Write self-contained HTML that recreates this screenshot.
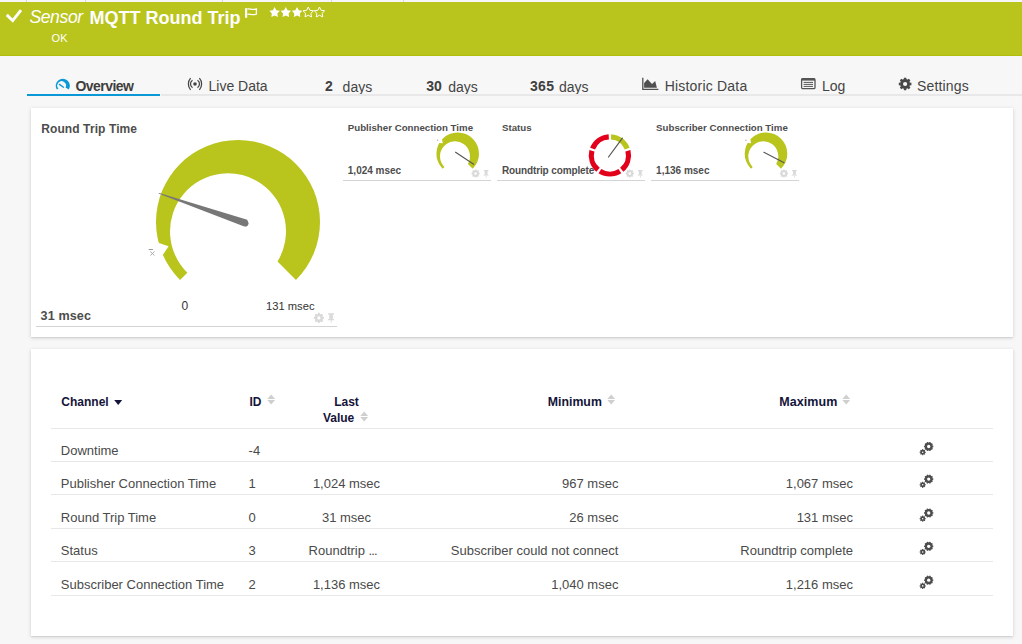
<!DOCTYPE html>
<html><head><meta charset="utf-8"><style>
html,body{margin:0;padding:0;}
body{width:1022px;height:644px;position:relative;overflow:hidden;background:#f7f7f7;font-family:"Liberation Sans",sans-serif;}
.t{position:absolute;line-height:1;white-space:nowrap;}
svg{overflow:visible;}
</style></head><body>
<div style="position:absolute;left:0px;top:0px;width:1022px;height:2px;background:#f6f6f9;"></div>
<div style="position:absolute;left:26px;top:0px;width:1px;height:2px;background:#d8d8dc;"></div>
<div style="position:absolute;left:85px;top:0px;width:1px;height:2px;background:#d8d8dc;"></div>
<div style="position:absolute;left:222px;top:0px;width:1px;height:2px;background:#d8d8dc;"></div>
<div style="position:absolute;left:331px;top:0px;width:1px;height:2px;background:#d8d8dc;"></div>
<div style="position:absolute;left:403px;top:0px;width:1px;height:2px;background:#d8d8dc;"></div>
<div style="position:absolute;left:0px;top:2px;width:1022px;height:53px;background:#b9c41c;"></div>
<div style="position:absolute;left:0px;top:54.6px;width:1022px;height:1px;background:#b2be0c;"></div>
<div style="position:absolute;left:0px;top:55.6px;width:1022px;height:1px;background:#f8f8fb;"></div>
<svg style="position:absolute;left:0;top:0" width="30" height="30"><polyline points="6.8,14.9 12.7,20.7 21,10.2" fill="none" stroke="#fff" stroke-width="2.9"/></svg>
<div class="t" style="left:29.40px;top:9.10px;font-size:17.6px;font-weight:400;color:#fff;font-style:italic;letter-spacing:-0.4px;">Sensor</div>
<div class="t" style="left:89.60px;top:8.86px;font-size:18px;font-weight:700;color:#fff;">MQTT Round Trip</div>
<svg style="position:absolute;left:244px;top:7px" width="16" height="12"><rect x="1" y="1.2" width="2.2" height="9.6" fill="#fff"/><path d="M3.4 2.2 C5.5 1.2 7.5 3.2 12.4 2 V7.2 C7.5 8.4 5.5 6.4 3.4 7.4" fill="none" stroke="#fff" stroke-width="1.3"/></svg>
<svg style="position:absolute;left:266px;top:4px" width="64" height="16"><polygon points="8.60,3.00 10.31,6.14 13.83,6.80 11.37,9.40 11.83,12.95 8.60,11.41 5.37,12.95 5.83,9.40 3.37,6.80 6.89,6.14" fill="#fff"/><polygon points="19.82,3.00 21.53,6.14 25.05,6.80 22.59,9.40 23.05,12.95 19.82,11.41 16.59,12.95 17.05,9.40 14.59,6.80 18.11,6.14" fill="#fff"/><polygon points="31.04,3.00 32.75,6.14 36.27,6.80 33.81,9.40 34.27,12.95 31.04,11.41 27.81,12.95 28.27,9.40 25.81,6.80 29.33,6.14" fill="#fff"/><polygon points="42.26,3.00 43.88,6.28 47.49,6.80 44.88,9.35 45.49,12.95 42.26,11.25 39.03,12.95 39.64,9.35 37.03,6.80 40.64,6.28" fill="none" stroke="#fff" stroke-width="1"/><polygon points="53.48,3.00 55.10,6.28 58.71,6.80 56.10,9.35 56.71,12.95 53.48,11.25 50.25,12.95 50.86,9.35 48.25,6.80 51.86,6.28" fill="none" stroke="#fff" stroke-width="1"/></svg>
<div class="t" style="left:51.60px;top:33.09px;font-size:11px;font-weight:400;color:#fff;">OK</div>
<svg style="position:absolute;left:0;top:0" width="1022" height="644"><path d="M56.78,89.56 A7.1,7.1 0 1 1 68.82,89.56 L65.51,87.50 A4.35,4.35 0 1 0 58.49,88.49 Z" fill="#0a98d6"/><line x1="59.4" y1="84.4" x2="63.5" y2="87.2" stroke="#0a98d6" stroke-width="1.35" stroke-linecap="round"/></svg>
<div class="t" style="left:75.50px;top:79.25px;font-size:14px;font-weight:700;color:#3e3e3e;letter-spacing:-0.55px;">Overview</div>
<svg style="position:absolute;left:186px;top:76px" width="18" height="16"><circle cx="9" cy="8" r="1.8" fill="#444"/><path d="M6.5 4.3 A4.42 4.42 0 0 0 6.5 11.7 M11.5 4.3 A4.42 4.42 0 0 1 11.5 11.7" fill="none" stroke="#444" stroke-width="1.25"/><path d="M4.6 2.2 A8.75 8.75 0 0 0 4.6 13.8 M13.4 2.2 A8.75 8.75 0 0 1 13.4 13.8" fill="none" stroke="#444" stroke-width="1.25"/></svg>
<div class="t" style="left:208.50px;top:79.25px;font-size:14px;font-weight:400;color:#444;">Live Data</div>
<div class="t" style="left:325.00px;top:78.75px;font-size:14px;font-weight:700;color:#404040;">2</div>
<div class="t" style="left:342.60px;top:80.05px;font-size:14px;font-weight:400;color:#444;">days</div>
<div class="t" style="left:426.30px;top:78.75px;font-size:14px;font-weight:700;color:#404040;">30</div>
<div class="t" style="left:448.30px;top:80.05px;font-size:14px;font-weight:400;color:#444;">days</div>
<div class="t" style="left:530.00px;top:78.75px;font-size:14px;font-weight:700;color:#404040;letter-spacing:0.3px;">365</div>
<div class="t" style="left:559.00px;top:80.05px;font-size:14px;font-weight:400;color:#444;">days</div>
<svg style="position:absolute;left:640px;top:76px" width="20" height="16"><path d="M2.8 1.8 V13.3 H18.4" fill="none" stroke="#505050" stroke-width="1.3"/><path d="M4.1 11.8 V7 L7.6 3.2 L12 8 L15.2 5 L16.9 11.8 Z" fill="#505050"/></svg>
<div class="t" style="left:664.70px;top:79.25px;font-size:14px;font-weight:400;color:#444;letter-spacing:0.2px;">Historic Data</div>
<svg style="position:absolute;left:800px;top:77px" width="17" height="13"><rect x="1.6" y="1.6" width="13.4" height="10" rx="1.2" fill="none" stroke="#555" stroke-width="1.3"/><rect x="1.6" y="1.2" width="13.4" height="2.4" fill="#555"/><path d="M3.6 5.4 H13 M3.6 7.4 H13 M3.6 9.4 H13" stroke="#555" stroke-width="1"/></svg>
<div class="t" style="left:822.00px;top:79.25px;font-size:14px;font-weight:400;color:#444;">Log</div>
<svg style="position:absolute;left:896px;top:75px" width="18" height="18"><path d="M14.00,9.00 A4.9,4.9 0 1 0 4.20,9.00 A4.9,4.9 0 1 0 14.00,9.00 Z" fill="#484848"/><polygon points="13.40,10.44 15.40,10.15 15.40,7.85 13.40,7.56" fill="#484848"/><polygon points="11.12,13.06 12.74,14.27 14.37,12.64 13.16,11.02" fill="#484848"/><polygon points="7.66,13.30 7.95,15.30 10.25,15.30 10.54,13.30" fill="#484848"/><polygon points="5.04,11.02 3.83,12.64 5.46,14.27 7.08,13.06" fill="#484848"/><polygon points="4.80,7.56 2.80,7.85 2.80,10.15 4.80,10.44" fill="#484848"/><polygon points="7.08,4.94 5.46,3.73 3.83,5.36 5.04,6.98" fill="#484848"/><polygon points="10.54,4.70 10.25,2.70 7.95,2.70 7.66,4.70" fill="#484848"/><polygon points="13.16,6.98 14.37,5.36 12.74,3.73 11.12,4.94" fill="#484848"/><circle cx="9.1" cy="9" r="2.1" fill="#f7f7f7"/></svg>
<div class="t" style="left:917.00px;top:79.25px;font-size:14px;font-weight:400;color:#444;letter-spacing:0.15px;">Settings</div>
<div style="position:absolute;left:27px;top:94px;width:133px;height:2px;background:#0a98d6;"></div>
<div style="position:absolute;left:161px;top:94px;width:861px;height:2px;background:#e8e8e8;"></div>
<div style="position:absolute;left:31px;top:108px;width:982px;height:229px;background:#fff;box-shadow:0 1px 4px rgba(0,0,0,0.15),0 1px 1px rgba(0,0,0,0.06);"></div>
<div class="t" style="left:41.20px;top:122.54px;font-size:12px;font-weight:700;color:#4d4d4d;letter-spacing:0.1px;">Round Trip Time</div>
<svg style="position:absolute;left:0;top:0" width="1022" height="644"><path d="M180.02,279.98 A82,82 0 1 1 295.98,279.98 L277.51,261.51 A58,58 0 1 0 187.34,272.66 Z" fill="#b9c41c"/><polygon points="157.5,242.6 168.6,246.3 162.6,255.2 150,255 150,242" fill="#fff"/><polygon points="158.4,193.6 159.2,193 247.2,219.8 248.4,224 246.6,226.6 243.6,226.2" fill="#777"/><circle cx="245.4" cy="223.2" r="3" fill="#777"/><path d="M148.7 249.5 H153" stroke="#999" stroke-width="1"/><path d="M150.3 251.4 L154.5 255.6 M154.5 251.4 L150.3 255.6" stroke="#aaa" stroke-width="1"/></svg>
<div class="t" style="left:181.60px;top:299.84px;font-size:12px;font-weight:400;color:#333;">0</div>
<div class="t" style="left:266.00px;top:300.52px;font-size:11.2px;font-weight:400;color:#333;">131 msec</div>
<div class="t" style="left:40.60px;top:309.63px;font-size:12.6px;font-weight:700;color:#4d4d4d;letter-spacing:0.1px;">31 msec</div>
<div style="position:absolute;left:36px;top:326px;width:301px;height:1px;background:#d4d4d4;"></div>
<svg style="position:absolute;left:0;top:0" width="1022" height="644"><path d="M322.90,317.90 A4.0,4.0 0 1 0 314.90,317.90 A4.0,4.0 0 1 0 322.90,317.90 Z" fill="#d9d9d9"/><polygon points="322.30,318.99 324.02,318.77 324.02,317.02 322.30,316.81" fill="#d9d9d9"/><polygon points="320.53,321.08 321.91,322.14 323.14,320.91 322.08,319.53" fill="#d9d9d9"/><polygon points="317.81,321.30 318.02,323.02 319.77,323.02 319.99,321.30" fill="#d9d9d9"/><polygon points="315.72,319.53 314.66,320.91 315.89,322.14 317.27,321.08" fill="#d9d9d9"/><polygon points="315.50,316.81 313.77,317.02 313.77,318.77 315.50,318.99" fill="#d9d9d9"/><polygon points="317.27,314.72 315.89,313.66 314.66,314.89 315.72,316.27" fill="#d9d9d9"/><polygon points="319.99,314.50 319.77,312.77 318.02,312.77 317.81,314.50" fill="#d9d9d9"/><polygon points="322.08,316.27 323.14,314.89 321.91,313.66 320.53,314.72" fill="#d9d9d9"/><circle cx="318.9" cy="317.9" r="1.625" fill="#fff"/><polygon points="328.20,313.20 333.95,313.20 333.95,314.70 328.20,314.70" fill="#d9d9d9"/><polygon points="329.32,314.45 332.82,314.45 332.82,318.70 329.32,318.70" fill="#d9d9d9"/><polygon points="329.20,318.45 332.95,318.45 334.70,320.20 327.45,320.20" fill="#d9d9d9"/><polygon points="330.70,320.07 331.57,320.07 331.57,322.82 330.70,322.82" fill="#d9d9d9"/></svg>
<div class="t" style="left:347.80px;top:122.59px;font-size:9.7px;font-weight:700;color:#4d4d4d;">Publisher Connection Time</div>
<div class="t" style="left:347.80px;top:165.73px;font-size:10px;font-weight:700;color:#4d4d4d;">1,024 msec</div>
<div style="position:absolute;left:343px;top:180px;width:148px;height:1px;background:#d4d4d4;"></div>
<svg style="position:absolute;left:0;top:0" width="1022" height="644"><path d="M442.64,168.76 A21.3,21.3 0 1 1 472.76,168.76 L467.92,163.92 A15,15 0 1 0 444.44,166.96 Z" fill="#b9c41c"/><polygon points="441.9,139.0 442.8,143.3 439.2,143.0 436.5,139.6" fill="#fff"/><circle cx="437.6" cy="140.2" r="0.6" fill="#b88"/><line x1="455.6" y1="152.2" x2="473.6" y2="164.2" stroke="#585858" stroke-width="1.15" stroke-linecap="round"/></svg>
<svg style="position:absolute;left:0;top:0" width="1022" height="644"><path d="M478.80,173.50 A3.2,3.2 0 1 0 472.40,173.50 A3.2,3.2 0 1 0 478.80,173.50 Z" fill="#d9d9d9"/><polygon points="478.20,174.38 479.70,174.20 479.70,172.80 478.20,172.62" fill="#d9d9d9"/><polygon points="476.82,175.96 478.00,176.89 478.99,175.90 478.06,174.72" fill="#d9d9d9"/><polygon points="474.73,176.10 474.90,177.60 476.30,177.60 476.48,176.10" fill="#d9d9d9"/><polygon points="473.14,174.72 472.21,175.90 473.20,176.89 474.38,175.96" fill="#d9d9d9"/><polygon points="473.00,172.62 471.50,172.80 471.50,174.20 473.00,174.38" fill="#d9d9d9"/><polygon points="474.38,171.04 473.20,170.11 472.21,171.10 473.14,172.28" fill="#d9d9d9"/><polygon points="476.48,170.90 476.30,169.40 474.90,169.40 474.73,170.90" fill="#d9d9d9"/><polygon points="478.06,172.28 478.99,171.10 478.00,170.11 476.82,171.04" fill="#d9d9d9"/><circle cx="475.6" cy="173.5" r="1.3" fill="#fff"/><polygon points="483.80,170.00 488.40,170.00 488.40,171.20 483.80,171.20" fill="#d9d9d9"/><polygon points="484.70,171.00 487.50,171.00 487.50,174.40 484.70,174.40" fill="#d9d9d9"/><polygon points="484.60,174.20 487.60,174.20 489.00,175.60 483.20,175.60" fill="#d9d9d9"/><polygon points="485.80,175.50 486.50,175.50 486.50,177.70 485.80,177.70" fill="#d9d9d9"/></svg>
<div class="t" style="left:502.00px;top:122.59px;font-size:9.7px;font-weight:700;color:#4d4d4d;">Status</div>
<div class="t" style="left:502.00px;top:165.73px;font-size:10px;font-weight:700;color:#4d4d4d;letter-spacing:-0.13px;">Roundtrip complete</div>
<div style="position:absolute;left:497.2px;top:180px;width:148px;height:1px;background:#d4d4d4;"></div>
<svg style="position:absolute;left:0;top:0" width="1022" height="644"><path d="M611.19,134.24 A21.2,21.2 0 0 1 629.62,147.63 L624.79,149.54 A16.0,16.0 0 0 0 610.88,139.43 Z" fill="#b9c41c"/><path d="M630.42,150.09 A21.2,21.2 0 0 1 623.38,171.76 L620.08,167.75 A16.0,16.0 0 0 0 625.39,151.39 Z" fill="#e3001b"/><path d="M621.29,173.28 A21.2,21.2 0 0 1 598.51,173.28 L601.30,168.89 A16.0,16.0 0 0 0 618.50,168.89 Z" fill="#e3001b"/><path d="M596.42,171.76 A21.2,21.2 0 0 1 589.38,150.09 L594.41,151.39 A16.0,16.0 0 0 0 599.72,167.75 Z" fill="#e3001b"/><path d="M590.18,147.63 A21.2,21.2 0 0 1 608.61,134.24 L608.92,139.43 A16.0,16.0 0 0 0 595.01,149.54 Z" fill="#e3001b"/><line x1="608.5" y1="157" x2="622.4" y2="138.2" stroke="#555" stroke-width="1.2" stroke-linecap="round"/></svg>
<svg style="position:absolute;left:0;top:0" width="1022" height="644"><path d="M633.00,173.50 A3.2,3.2 0 1 0 626.60,173.50 A3.2,3.2 0 1 0 633.00,173.50 Z" fill="#d9d9d9"/><polygon points="632.40,174.38 633.90,174.20 633.90,172.80 632.40,172.62" fill="#d9d9d9"/><polygon points="631.02,175.96 632.20,176.89 633.19,175.90 632.26,174.72" fill="#d9d9d9"/><polygon points="628.92,176.10 629.10,177.60 630.50,177.60 630.67,176.10" fill="#d9d9d9"/><polygon points="627.34,174.72 626.41,175.90 627.40,176.89 628.58,175.96" fill="#d9d9d9"/><polygon points="627.20,172.62 625.70,172.80 625.70,174.20 627.20,174.38" fill="#d9d9d9"/><polygon points="628.58,171.04 627.40,170.11 626.41,171.10 627.34,172.28" fill="#d9d9d9"/><polygon points="630.67,170.90 630.50,169.40 629.10,169.40 628.92,170.90" fill="#d9d9d9"/><polygon points="632.26,172.28 633.19,171.10 632.20,170.11 631.02,171.04" fill="#d9d9d9"/><circle cx="629.8" cy="173.5" r="1.3" fill="#fff"/><polygon points="638.00,170.00 642.60,170.00 642.60,171.20 638.00,171.20" fill="#d9d9d9"/><polygon points="638.90,171.00 641.70,171.00 641.70,174.40 638.90,174.40" fill="#d9d9d9"/><polygon points="638.80,174.20 641.80,174.20 643.20,175.60 637.40,175.60" fill="#d9d9d9"/><polygon points="640.00,175.50 640.70,175.50 640.70,177.70 640.00,177.70" fill="#d9d9d9"/></svg>
<div class="t" style="left:656.10px;top:122.59px;font-size:9.7px;font-weight:700;color:#4d4d4d;">Subscriber Connection Time</div>
<div class="t" style="left:656.10px;top:165.73px;font-size:10px;font-weight:700;color:#4d4d4d;">1,136 msec</div>
<div style="position:absolute;left:651.3px;top:180px;width:148px;height:1px;background:#d4d4d4;"></div>
<svg style="position:absolute;left:0;top:0" width="1022" height="644"><path d="M750.94,168.76 A21.3,21.3 0 1 1 781.06,168.76 L776.22,163.92 A15,15 0 1 0 752.74,166.96 Z" fill="#b9c41c"/><polygon points="750.1999999999999,139.0 751.0999999999999,143.3 747.5,143.0 744.8,139.6" fill="#fff"/><circle cx="745.9" cy="140.2" r="0.6" fill="#b88"/><line x1="763.9" y1="152.3" x2="784.0999999999999" y2="162.7" stroke="#585858" stroke-width="1.15" stroke-linecap="round"/></svg>
<svg style="position:absolute;left:0;top:0" width="1022" height="644"><path d="M787.10,173.50 A3.2,3.2 0 1 0 780.70,173.50 A3.2,3.2 0 1 0 787.10,173.50 Z" fill="#d9d9d9"/><polygon points="786.50,174.38 788.00,174.20 788.00,172.80 786.50,172.62" fill="#d9d9d9"/><polygon points="785.12,175.96 786.30,176.89 787.29,175.90 786.36,174.72" fill="#d9d9d9"/><polygon points="783.02,176.10 783.20,177.60 784.60,177.60 784.77,176.10" fill="#d9d9d9"/><polygon points="781.44,174.72 780.51,175.90 781.50,176.89 782.68,175.96" fill="#d9d9d9"/><polygon points="781.30,172.62 779.80,172.80 779.80,174.20 781.30,174.38" fill="#d9d9d9"/><polygon points="782.68,171.04 781.50,170.11 780.51,171.10 781.44,172.28" fill="#d9d9d9"/><polygon points="784.77,170.90 784.60,169.40 783.20,169.40 783.02,170.90" fill="#d9d9d9"/><polygon points="786.36,172.28 787.29,171.10 786.30,170.11 785.12,171.04" fill="#d9d9d9"/><circle cx="783.9" cy="173.5" r="1.3" fill="#fff"/><polygon points="792.10,170.00 796.70,170.00 796.70,171.20 792.10,171.20" fill="#d9d9d9"/><polygon points="793.00,171.00 795.80,171.00 795.80,174.40 793.00,174.40" fill="#d9d9d9"/><polygon points="792.90,174.20 795.90,174.20 797.30,175.60 791.50,175.60" fill="#d9d9d9"/><polygon points="794.10,175.50 794.80,175.50 794.80,177.70 794.10,177.70" fill="#d9d9d9"/></svg>
<div style="position:absolute;left:31px;top:349px;width:982px;height:287px;background:#fff;box-shadow:0 1px 4px rgba(0,0,0,0.15),0 1px 1px rgba(0,0,0,0.06);"></div>
<div class="t" style="left:61.30px;top:395.64px;font-size:12px;font-weight:700;color:#14143a;">Channel</div>
<svg style="position:absolute;left:114px;top:400px" width="10" height="6"><path d="M0.2 0.1 H8.2 L4.2 4.9 Z" fill="#14143a"/></svg>
<div class="t" style="left:249.50px;top:395.64px;font-size:12px;font-weight:700;color:#14143a;">ID</div>
<svg style="position:absolute;left:266.8px;top:394.3px" width="9" height="12"><path d="M0.3 4.9 L4.2 0.4 L8.1 4.9 Z M0.3 6.1 L4.2 10.6 L8.1 6.1 Z" fill="#cfcfcf"/></svg>
<div class="t" style="left:146.50px;width:400px;text-align:center;top:395.64px;font-size:12px;font-weight:700;color:#14143a;">Last</div>
<div class="t" style="left:322.90px;top:411.54px;font-size:12px;font-weight:700;color:#14143a;">Value</div>
<svg style="position:absolute;left:360.2px;top:410.6px" width="9" height="12"><path d="M0.3 4.9 L4.2 0.4 L8.1 4.9 Z M0.3 6.1 L4.2 10.6 L8.1 6.1 Z" fill="#cfcfcf"/></svg>
<div class="t" style="right:420.20px;top:396.09px;font-size:12.3px;font-weight:700;color:#14143a;">Minimum</div>
<svg style="position:absolute;left:606.8px;top:394.3px" width="9" height="12"><path d="M0.3 4.9 L4.2 0.4 L8.1 4.9 Z M0.3 6.1 L4.2 10.6 L8.1 6.1 Z" fill="#cfcfcf"/></svg>
<div class="t" style="right:184.50px;top:395.92px;font-size:12.5px;font-weight:700;color:#14143a;letter-spacing:0.1px;">Maximum</div>
<svg style="position:absolute;left:841.8px;top:394.3px" width="9" height="12"><path d="M0.3 4.9 L4.2 0.4 L8.1 4.9 Z M0.3 6.1 L4.2 10.6 L8.1 6.1 Z" fill="#cfcfcf"/></svg>
<div style="position:absolute;left:51px;top:428px;width:942px;height:1px;background:#e8e8e8;"></div>
<div style="position:absolute;left:51px;top:461px;width:942px;height:1px;background:#e8e8e8;"></div>
<div style="position:absolute;left:51px;top:494px;width:942px;height:1px;background:#e8e8e8;"></div>
<div style="position:absolute;left:51px;top:528px;width:942px;height:1px;background:#e8e8e8;"></div>
<div style="position:absolute;left:51px;top:561px;width:942px;height:1px;background:#e8e8e8;"></div>
<div style="position:absolute;left:51px;top:595px;width:942px;height:1px;background:#e8e8e8;"></div>
<div class="t" style="left:60.80px;top:444.10px;font-size:13px;font-weight:400;color:#4a4a4a;">Downtime</div>
<div class="t" style="left:248.60px;top:444.10px;font-size:13px;font-weight:400;color:#4a4a4a;">-4</div>
<svg style="position:absolute;left:0;top:0" width="1022" height="644"><path d="M932.65,446.50 A3.95,3.95 0 1 0 924.75,446.50 A3.95,3.95 0 1 0 932.65,446.50 Z" fill="#4d4d4d"/><polygon points="932.05,447.31 933.35,447.15 933.35,445.85 932.05,445.69" fill="#4d4d4d"/><polygon points="930.93,449.13 932.08,449.76 932.84,448.71 931.89,447.81" fill="#4d4d4d"/><polygon points="928.96,449.94 929.52,451.12 930.76,450.72 930.51,449.43" fill="#4d4d4d"/><polygon points="926.89,449.43 926.64,450.72 927.88,451.12 928.44,449.94" fill="#4d4d4d"/><polygon points="925.51,447.81 924.56,448.71 925.32,449.76 926.47,449.13" fill="#4d4d4d"/><polygon points="925.35,445.69 924.05,445.85 924.05,447.15 925.35,447.31" fill="#4d4d4d"/><polygon points="926.47,443.87 925.32,443.24 924.56,444.29 925.51,445.19" fill="#4d4d4d"/><polygon points="928.44,443.06 927.88,441.88 926.64,442.28 926.89,443.57" fill="#4d4d4d"/><polygon points="930.51,443.57 930.76,442.28 929.52,441.88 928.96,443.06" fill="#4d4d4d"/><polygon points="931.89,445.19 932.84,444.29 932.08,443.24 930.93,443.87" fill="#4d4d4d"/><circle cx="928.7" cy="446.5" r="1.65" fill="#fff"/><path d="M925.10,452.20 A2.4,2.4 0 1 0 920.30,452.20 A2.4,2.4 0 1 0 925.10,452.20 Z" fill="#4a4a4a"/><polygon points="924.50,452.83 925.80,452.70 925.80,451.70 924.50,451.58" fill="#4a4a4a"/><polygon points="923.53,453.91 924.54,454.75 925.25,454.04 924.41,453.03" fill="#4a4a4a"/><polygon points="922.08,454.00 922.20,455.30 923.20,455.30 923.33,454.00" fill="#4a4a4a"/><polygon points="920.99,453.03 920.15,454.04 920.86,454.75 921.87,453.91" fill="#4a4a4a"/><polygon points="920.90,451.58 919.60,451.70 919.60,452.70 920.90,452.83" fill="#4a4a4a"/><polygon points="921.87,450.49 920.86,449.65 920.15,450.36 920.99,451.37" fill="#4a4a4a"/><polygon points="923.33,450.40 923.20,449.10 922.20,449.10 922.08,450.40" fill="#4a4a4a"/><polygon points="924.41,451.37 925.25,450.36 924.54,449.65 923.53,450.49" fill="#4a4a4a"/><circle cx="922.7" cy="452.20000000000005" r="0.8" fill="#fff"/></svg>
<div class="t" style="left:60.80px;top:476.70px;font-size:13px;font-weight:400;color:#4a4a4a;">Publisher Connection Time</div>
<div class="t" style="left:248.60px;top:476.70px;font-size:13px;font-weight:400;color:#4a4a4a;">1</div>
<div class="t" style="left:146.50px;width:400px;text-align:center;top:476.70px;font-size:13px;font-weight:400;color:#4a4a4a;">1,024 msec</div>
<div class="t" style="right:403.60px;top:476.70px;font-size:13px;font-weight:400;color:#4a4a4a;">967 msec</div>
<div class="t" style="right:169.00px;top:476.70px;font-size:13px;font-weight:400;color:#4a4a4a;">1,067 msec</div>
<svg style="position:absolute;left:0;top:0" width="1022" height="644"><path d="M932.65,479.10 A3.95,3.95 0 1 0 924.75,479.10 A3.95,3.95 0 1 0 932.65,479.10 Z" fill="#4d4d4d"/><polygon points="932.05,479.91 933.35,479.75 933.35,478.45 932.05,478.29" fill="#4d4d4d"/><polygon points="930.93,481.73 932.08,482.36 932.84,481.31 931.89,480.41" fill="#4d4d4d"/><polygon points="928.96,482.54 929.52,483.72 930.76,483.32 930.51,482.03" fill="#4d4d4d"/><polygon points="926.89,482.03 926.64,483.32 927.88,483.72 928.44,482.54" fill="#4d4d4d"/><polygon points="925.51,480.41 924.56,481.31 925.32,482.36 926.47,481.73" fill="#4d4d4d"/><polygon points="925.35,478.29 924.05,478.45 924.05,479.75 925.35,479.91" fill="#4d4d4d"/><polygon points="926.47,476.47 925.32,475.84 924.56,476.89 925.51,477.79" fill="#4d4d4d"/><polygon points="928.44,475.66 927.88,474.48 926.64,474.88 926.89,476.17" fill="#4d4d4d"/><polygon points="930.51,476.17 930.76,474.88 929.52,474.48 928.96,475.66" fill="#4d4d4d"/><polygon points="931.89,477.79 932.84,476.89 932.08,475.84 930.93,476.47" fill="#4d4d4d"/><circle cx="928.7" cy="479.09999999999997" r="1.65" fill="#fff"/><path d="M925.10,484.80 A2.4,2.4 0 1 0 920.30,484.80 A2.4,2.4 0 1 0 925.10,484.80 Z" fill="#4a4a4a"/><polygon points="924.50,485.43 925.80,485.30 925.80,484.30 924.50,484.18" fill="#4a4a4a"/><polygon points="923.53,486.51 924.54,487.35 925.25,486.64 924.41,485.63" fill="#4a4a4a"/><polygon points="922.08,486.60 922.20,487.90 923.20,487.90 923.33,486.60" fill="#4a4a4a"/><polygon points="920.99,485.63 920.15,486.64 920.86,487.35 921.87,486.51" fill="#4a4a4a"/><polygon points="920.90,484.18 919.60,484.30 919.60,485.30 920.90,485.43" fill="#4a4a4a"/><polygon points="921.87,483.09 920.86,482.25 920.15,482.96 920.99,483.97" fill="#4a4a4a"/><polygon points="923.33,483.00 923.20,481.70 922.20,481.70 922.08,483.00" fill="#4a4a4a"/><polygon points="924.41,483.97 925.25,482.96 924.54,482.25 923.53,483.09" fill="#4a4a4a"/><circle cx="922.7" cy="484.8" r="0.8" fill="#fff"/></svg>
<div class="t" style="left:60.80px;top:510.60px;font-size:13px;font-weight:400;color:#4a4a4a;">Round Trip Time</div>
<div class="t" style="left:248.60px;top:510.60px;font-size:13px;font-weight:400;color:#4a4a4a;">0</div>
<div class="t" style="left:146.50px;width:400px;text-align:center;top:510.60px;font-size:13px;font-weight:400;color:#4a4a4a;">31 msec</div>
<div class="t" style="right:403.60px;top:510.60px;font-size:13px;font-weight:400;color:#4a4a4a;">26 msec</div>
<div class="t" style="right:169.00px;top:510.60px;font-size:13px;font-weight:400;color:#4a4a4a;">131 msec</div>
<svg style="position:absolute;left:0;top:0" width="1022" height="644"><path d="M932.65,513.00 A3.95,3.95 0 1 0 924.75,513.00 A3.95,3.95 0 1 0 932.65,513.00 Z" fill="#4d4d4d"/><polygon points="932.05,513.81 933.35,513.65 933.35,512.35 932.05,512.19" fill="#4d4d4d"/><polygon points="930.93,515.63 932.08,516.26 932.84,515.21 931.89,514.31" fill="#4d4d4d"/><polygon points="928.96,516.44 929.52,517.62 930.76,517.22 930.51,515.93" fill="#4d4d4d"/><polygon points="926.89,515.93 926.64,517.22 927.88,517.62 928.44,516.44" fill="#4d4d4d"/><polygon points="925.51,514.31 924.56,515.21 925.32,516.26 926.47,515.63" fill="#4d4d4d"/><polygon points="925.35,512.19 924.05,512.35 924.05,513.65 925.35,513.81" fill="#4d4d4d"/><polygon points="926.47,510.37 925.32,509.74 924.56,510.79 925.51,511.69" fill="#4d4d4d"/><polygon points="928.44,509.56 927.88,508.38 926.64,508.78 926.89,510.07" fill="#4d4d4d"/><polygon points="930.51,510.07 930.76,508.78 929.52,508.38 928.96,509.56" fill="#4d4d4d"/><polygon points="931.89,511.69 932.84,510.79 932.08,509.74 930.93,510.37" fill="#4d4d4d"/><circle cx="928.7" cy="513.0" r="1.65" fill="#fff"/><path d="M925.10,518.70 A2.4,2.4 0 1 0 920.30,518.70 A2.4,2.4 0 1 0 925.10,518.70 Z" fill="#4a4a4a"/><polygon points="924.50,519.33 925.80,519.20 925.80,518.20 924.50,518.08" fill="#4a4a4a"/><polygon points="923.53,520.41 924.54,521.25 925.25,520.54 924.41,519.53" fill="#4a4a4a"/><polygon points="922.08,520.50 922.20,521.80 923.20,521.80 923.33,520.50" fill="#4a4a4a"/><polygon points="920.99,519.53 920.15,520.54 920.86,521.25 921.87,520.41" fill="#4a4a4a"/><polygon points="920.90,518.08 919.60,518.20 919.60,519.20 920.90,519.33" fill="#4a4a4a"/><polygon points="921.87,516.99 920.86,516.15 920.15,516.86 920.99,517.87" fill="#4a4a4a"/><polygon points="923.33,516.90 923.20,515.60 922.20,515.60 922.08,516.90" fill="#4a4a4a"/><polygon points="924.41,517.87 925.25,516.86 924.54,516.15 923.53,516.99" fill="#4a4a4a"/><circle cx="922.7" cy="518.7" r="0.8" fill="#fff"/></svg>
<div class="t" style="left:60.80px;top:543.90px;font-size:13px;font-weight:400;color:#4a4a4a;">Status</div>
<div class="t" style="left:248.60px;top:543.90px;font-size:13px;font-weight:400;color:#4a4a4a;">3</div>
<div class="t" style="left:308.60px;top:543.90px;font-size:13px;font-weight:400;color:#4a4a4a;">Roundtrip <span style="letter-spacing:-0.9px">...</span></div>
<div class="t" style="right:403.60px;top:543.90px;font-size:13px;font-weight:400;color:#4a4a4a;">Subscriber could not connect</div>
<div class="t" style="right:169.00px;top:543.90px;font-size:13px;font-weight:400;color:#4a4a4a;">Roundtrip complete</div>
<svg style="position:absolute;left:0;top:0" width="1022" height="644"><path d="M932.65,546.30 A3.95,3.95 0 1 0 924.75,546.30 A3.95,3.95 0 1 0 932.65,546.30 Z" fill="#4d4d4d"/><polygon points="932.05,547.11 933.35,546.95 933.35,545.65 932.05,545.49" fill="#4d4d4d"/><polygon points="930.93,548.93 932.08,549.56 932.84,548.51 931.89,547.61" fill="#4d4d4d"/><polygon points="928.96,549.74 929.52,550.92 930.76,550.52 930.51,549.23" fill="#4d4d4d"/><polygon points="926.89,549.23 926.64,550.52 927.88,550.92 928.44,549.74" fill="#4d4d4d"/><polygon points="925.51,547.61 924.56,548.51 925.32,549.56 926.47,548.93" fill="#4d4d4d"/><polygon points="925.35,545.49 924.05,545.65 924.05,546.95 925.35,547.11" fill="#4d4d4d"/><polygon points="926.47,543.67 925.32,543.04 924.56,544.09 925.51,544.99" fill="#4d4d4d"/><polygon points="928.44,542.86 927.88,541.68 926.64,542.08 926.89,543.37" fill="#4d4d4d"/><polygon points="930.51,543.37 930.76,542.08 929.52,541.68 928.96,542.86" fill="#4d4d4d"/><polygon points="931.89,544.99 932.84,544.09 932.08,543.04 930.93,543.67" fill="#4d4d4d"/><circle cx="928.7" cy="546.3" r="1.65" fill="#fff"/><path d="M925.10,552.00 A2.4,2.4 0 1 0 920.30,552.00 A2.4,2.4 0 1 0 925.10,552.00 Z" fill="#4a4a4a"/><polygon points="924.50,552.62 925.80,552.50 925.80,551.50 924.50,551.38" fill="#4a4a4a"/><polygon points="923.53,553.71 924.54,554.55 925.25,553.84 924.41,552.83" fill="#4a4a4a"/><polygon points="922.08,553.80 922.20,555.10 923.20,555.10 923.33,553.80" fill="#4a4a4a"/><polygon points="920.99,552.83 920.15,553.84 920.86,554.55 921.87,553.71" fill="#4a4a4a"/><polygon points="920.90,551.38 919.60,551.50 919.60,552.50 920.90,552.62" fill="#4a4a4a"/><polygon points="921.87,550.29 920.86,549.45 920.15,550.16 920.99,551.17" fill="#4a4a4a"/><polygon points="923.33,550.20 923.20,548.90 922.20,548.90 922.08,550.20" fill="#4a4a4a"/><polygon points="924.41,551.17 925.25,550.16 924.54,549.45 923.53,550.29" fill="#4a4a4a"/><circle cx="922.7" cy="552.0" r="0.8" fill="#fff"/></svg>
<div class="t" style="left:60.80px;top:577.80px;font-size:13px;font-weight:400;color:#4a4a4a;">Subscriber Connection Time</div>
<div class="t" style="left:248.60px;top:577.80px;font-size:13px;font-weight:400;color:#4a4a4a;">2</div>
<div class="t" style="left:146.50px;width:400px;text-align:center;top:577.80px;font-size:13px;font-weight:400;color:#4a4a4a;">1,136 msec</div>
<div class="t" style="right:403.60px;top:577.80px;font-size:13px;font-weight:400;color:#4a4a4a;">1,040 msec</div>
<div class="t" style="right:169.00px;top:577.80px;font-size:13px;font-weight:400;color:#4a4a4a;">1,216 msec</div>
<svg style="position:absolute;left:0;top:0" width="1022" height="644"><path d="M932.65,580.20 A3.95,3.95 0 1 0 924.75,580.20 A3.95,3.95 0 1 0 932.65,580.20 Z" fill="#4d4d4d"/><polygon points="932.05,581.01 933.35,580.85 933.35,579.55 932.05,579.39" fill="#4d4d4d"/><polygon points="930.93,582.83 932.08,583.46 932.84,582.41 931.89,581.51" fill="#4d4d4d"/><polygon points="928.96,583.64 929.52,584.82 930.76,584.42 930.51,583.13" fill="#4d4d4d"/><polygon points="926.89,583.13 926.64,584.42 927.88,584.82 928.44,583.64" fill="#4d4d4d"/><polygon points="925.51,581.51 924.56,582.41 925.32,583.46 926.47,582.83" fill="#4d4d4d"/><polygon points="925.35,579.39 924.05,579.55 924.05,580.85 925.35,581.01" fill="#4d4d4d"/><polygon points="926.47,577.57 925.32,576.94 924.56,577.99 925.51,578.89" fill="#4d4d4d"/><polygon points="928.44,576.76 927.88,575.58 926.64,575.98 926.89,577.27" fill="#4d4d4d"/><polygon points="930.51,577.27 930.76,575.98 929.52,575.58 928.96,576.76" fill="#4d4d4d"/><polygon points="931.89,578.89 932.84,577.99 932.08,576.94 930.93,577.57" fill="#4d4d4d"/><circle cx="928.7" cy="580.1999999999999" r="1.65" fill="#fff"/><path d="M925.10,585.90 A2.4,2.4 0 1 0 920.30,585.90 A2.4,2.4 0 1 0 925.10,585.90 Z" fill="#4a4a4a"/><polygon points="924.50,586.52 925.80,586.40 925.80,585.40 924.50,585.27" fill="#4a4a4a"/><polygon points="923.53,587.61 924.54,588.45 925.25,587.74 924.41,586.73" fill="#4a4a4a"/><polygon points="922.08,587.70 922.20,589.00 923.20,589.00 923.33,587.70" fill="#4a4a4a"/><polygon points="920.99,586.73 920.15,587.74 920.86,588.45 921.87,587.61" fill="#4a4a4a"/><polygon points="920.90,585.27 919.60,585.40 919.60,586.40 920.90,586.52" fill="#4a4a4a"/><polygon points="921.87,584.19 920.86,583.35 920.15,584.06 920.99,585.07" fill="#4a4a4a"/><polygon points="923.33,584.10 923.20,582.80 922.20,582.80 922.08,584.10" fill="#4a4a4a"/><polygon points="924.41,585.07 925.25,584.06 924.54,583.35 923.53,584.19" fill="#4a4a4a"/><circle cx="922.7" cy="585.9" r="0.8" fill="#fff"/></svg>
</body></html>
